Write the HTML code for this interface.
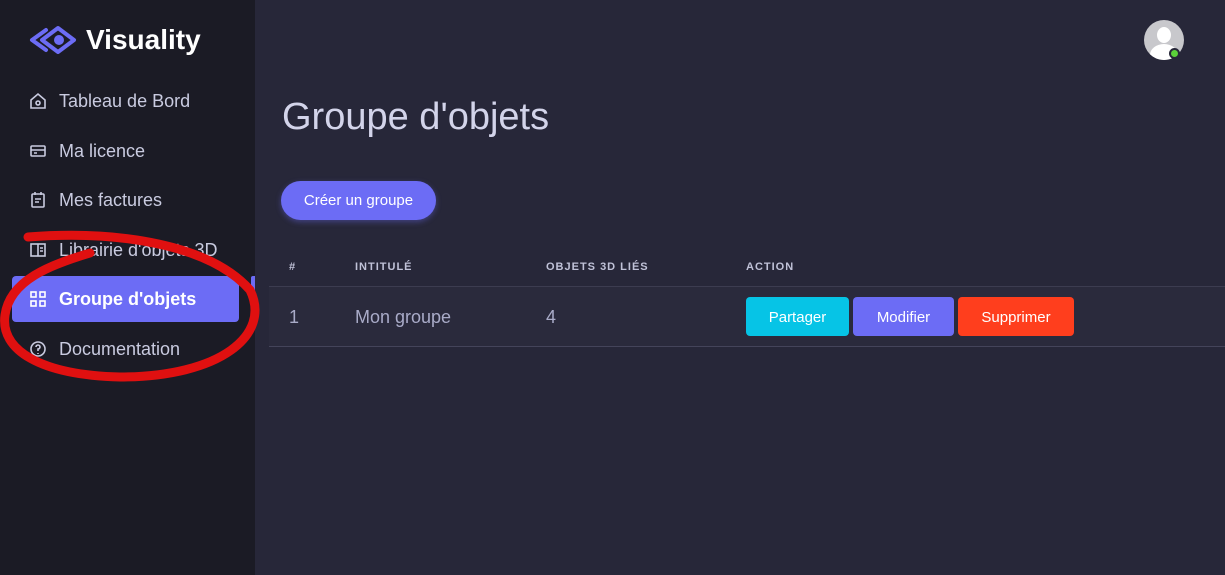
<!DOCTYPE html>
<html><head><meta charset="utf-8"><style>
*{margin:0;padding:0;box-sizing:border-box}
body{width:1225px;height:575px;overflow:hidden;background:#272739;font-family:"Liberation Sans",sans-serif;position:relative}
.sb{position:absolute;left:0;top:0;width:255px;height:575px;background:#1b1b25}
.logo{position:absolute;left:28px;top:24px;display:flex;align-items:center;color:#fff;font-weight:bold;font-size:28px}
.nav{position:absolute;left:12px;width:227px;height:46px;display:flex;align-items:center;color:#c9cbe0;font-size:18px}
.nav svg{position:absolute;left:17px}
.nav span{position:absolute;left:47px}
.act{background:#6c6cf5;color:#fff;font-weight:bold;border-radius:4px}
h1{position:absolute;left:282px;top:96px;font-size:38px;font-weight:normal;color:#d3d4ea}
.btn{position:absolute;left:281px;top:181px;width:155px;height:39px;border-radius:20px;background:#6c6cf5;color:#fff;font-size:15px;display:flex;align-items:center;justify-content:center;box-shadow:0 2px 6px rgba(108,108,245,.4)}
.th{position:absolute;top:261px;font-size:11px;font-weight:bold;color:#c0c2d8;letter-spacing:1px}
.row{position:absolute;left:269px;top:286px;width:956px;height:61px;background:#2a2a3c;border-top:1px solid #3c3c50;border-bottom:1px solid #44445a}
.td{position:absolute;top:307px;font-size:18px;color:#a9abc8}
.b{position:absolute;top:297px;height:39px;border-radius:4px;color:#fff;font-size:15px;display:flex;align-items:center;justify-content:center;padding-top:2px}
</style></head><body>
<div class="sb"></div>
<div class="logo"><svg width="50" height="32" viewBox="0 0 50 32"><path d="M4 16 L18 6 M4 16 L18 26" stroke="#6c6cf5" stroke-width="4" fill="none" stroke-linecap="round"/><path d="M14 16 L30 4 L46 16 L30 28Z" fill="none" stroke="#6c6cf5" stroke-width="4" stroke-linejoin="round"/><circle cx="31" cy="16" r="5" fill="#6c6cf5"/></svg><span style="margin-left:8px">Visuality</span></div>
<div class="nav" style="top:78px"><svg width="18" height="18" viewBox="0 0 18 18" fill="none" stroke="#c9cbe0" stroke-width="1.6"><path d="M2 8 L9 2 L16 8 V16 H2Z"/><circle cx="9" cy="11" r="2"/></svg><span>Tableau de Bord</span></div>
<div class="nav" style="top:128px"><svg width="18" height="18" viewBox="0 0 18 18" fill="none" stroke="#c9cbe0" stroke-width="1.6"><rect x="2" y="4" width="14" height="10" rx="1"/><path d="M2 8H16M5 11H8"/></svg><span>Ma licence</span></div>
<div class="nav" style="top:177px"><svg width="18" height="18" viewBox="0 0 18 18" fill="none" stroke="#c9cbe0" stroke-width="1.6"><rect x="3" y="3" width="12" height="13" rx="1"/><path d="M6 1V4M12 1V4M6 8H12M6 11H10"/></svg><span>Mes factures</span></div>
<div class="nav" style="top:227px"><svg width="18" height="18" viewBox="0 0 18 18" fill="none" stroke="#c9cbe0" stroke-width="1.6"><rect x="2" y="3" width="14" height="12"/><path d="M9 3V15M11 7H14M11 10H14"/></svg><span>Librairie d'objets 3D</span></div>
<div class="nav act" style="top:276px"><svg width="18" height="18" viewBox="0 0 18 18" fill="none" stroke="#fff" stroke-width="1.6"><rect x="2" y="2" width="5" height="5"/><rect x="11" y="2" width="5" height="5"/><rect x="2" y="11" width="5" height="5"/><rect x="11" y="11" width="5" height="5"/></svg><span>Groupe d'objets</span></div>
<div style="position:absolute;left:251px;top:276px;width:4px;height:22px;background:#6c6cf5;border-radius:2px 0 0 2px"></div>
<div class="nav" style="top:326px"><svg width="18" height="18" viewBox="0 0 18 18" fill="none" stroke="#c9cbe0" stroke-width="1.6"><circle cx="9" cy="9" r="7"/><path d="M7 7a2 2 0 1 1 2 2v2M9 13v1"/></svg><span>Documentation</span></div>
<svg style="position:absolute;left:0;top:225px" width="270" height="165"><path d="M28 12 C120 5 210 20 250 65 C272 110 220 152 120 152 C40 150 0 125 5 90 C10 55 50 40 90 28" fill="none" stroke="#e01010" stroke-width="9" stroke-linecap="round"/></svg>
<div style="position:absolute;left:1144px;top:20px;width:40px;height:40px;border-radius:50%;background:#c8c8cc;overflow:hidden"><div style="position:absolute;left:13px;top:7px;width:14px;height:16px;border-radius:50%;background:#fff"></div><div style="position:absolute;left:6px;top:24px;width:28px;height:22px;border-radius:50% 50% 0 0;background:#fff"></div></div>
<div style="position:absolute;left:1169px;top:48px;width:11px;height:11px;border-radius:50%;background:#5bd13a;border:2px solid #272739"></div>
<h1>Groupe d'objets</h1>
<div class="btn">Créer un groupe</div>
<div class="th" style="left:289px">#</div>
<div class="th" style="left:355px">INTITULÉ</div>
<div class="th" style="left:546px">OBJETS 3D LIÉS</div>
<div class="th" style="left:746px">ACTION</div>
<div class="row"></div>
<div class="td" style="left:289px">1</div>
<div class="td" style="left:355px">Mon groupe</div>
<div class="td" style="left:546px">4</div>
<div class="b" style="left:746px;width:103px;background:#06c4e6">Partager</div>
<div class="b" style="left:853px;width:101px;background:#6c6cf5">Modifier</div>
<div class="b" style="left:958px;width:116px;background:#ff3e1d">Supprimer</div>
</body></html>
